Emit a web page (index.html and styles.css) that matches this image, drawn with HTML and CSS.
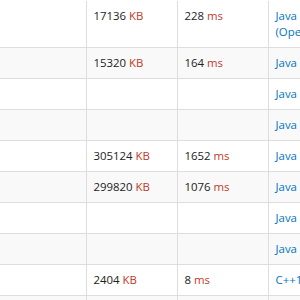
FILE: index.html
```html
<!DOCTYPE html>
<html>
<head>
<meta charset="utf-8">
<link rel="stylesheet" href="styles.css">
</head>
<body>
<table class="status">
  <colgroup>
    <col class="c-a"><col class="c-b"><col class="c-c"><col class="c-d">
  </colgroup>
  <tbody>
    <tr><td></td><td>17136 <span class="unit">KB</span></td><td>228 <span class="unit">ms</span></td><td><a href="#">Java 8 (OpenJDK)</a></td></tr>
    <tr><td></td><td>15320 <span class="unit">KB</span></td><td>164 <span class="unit">ms</span></td><td><a href="#">Java 8</a></td></tr>
    <tr><td></td><td></td><td></td><td><a href="#">Java 8</a></td></tr>
    <tr><td></td><td></td><td></td><td><a href="#">Java 8</a></td></tr>
    <tr><td></td><td>305124 <span class="unit">KB</span></td><td>1652 <span class="unit">ms</span></td><td><a href="#">Java 8</a></td></tr>
    <tr><td></td><td>299820 <span class="unit">KB</span></td><td>1076 <span class="unit">ms</span></td><td><a href="#">Java 8</a></td></tr>
    <tr><td></td><td></td><td></td><td><a href="#">Java 8</a></td></tr>
    <tr><td></td><td></td><td></td><td><a href="#">Java 8</a></td></tr>
    <tr><td></td><td>2404 <span class="unit">KB</span></td><td>8 <span class="unit">ms</span></td><td><a href="#">C++17</a></td></tr>
    <tr><td></td><td></td><td></td><td><a href="#">Java 8</a></td></tr>
  </tbody>
</table>
</body>
</html>
```
FILE: styles.css
```css
html, body {
  margin: 0;
  padding: 0;
  background: #fff;
  overflow: hidden;
}
body {
  width: 300px;
  height: 300px;
  font-family: "Open Sans", "Liberation Sans", sans-serif;
  font-size: 11.4px;
  line-height: 16px;
  color: #222;
}
.status {
  border-collapse: collapse;
  table-layout: fixed;
  width: 359px;
  margin-top: 1px;
}
.c-a { width: 86px; }
.c-b { width: 91px; }
.c-c { width: 91px; }
.c-d { width: 91px; }
.status td {
  padding: 7px 6px 7px 7px;
  vertical-align: top;
  border-bottom: 1px solid #ddd;
  border-left: 1px solid #ddd;
  height: 16px;
  white-space: normal;
}
.status td:first-child { border-left: none; }
.status tr:nth-child(even) td { background: #f9f9f9; }
.unit { color: #c0392b; }
.status a {
  color: #0076c0;
  text-decoration: none;
}
```
